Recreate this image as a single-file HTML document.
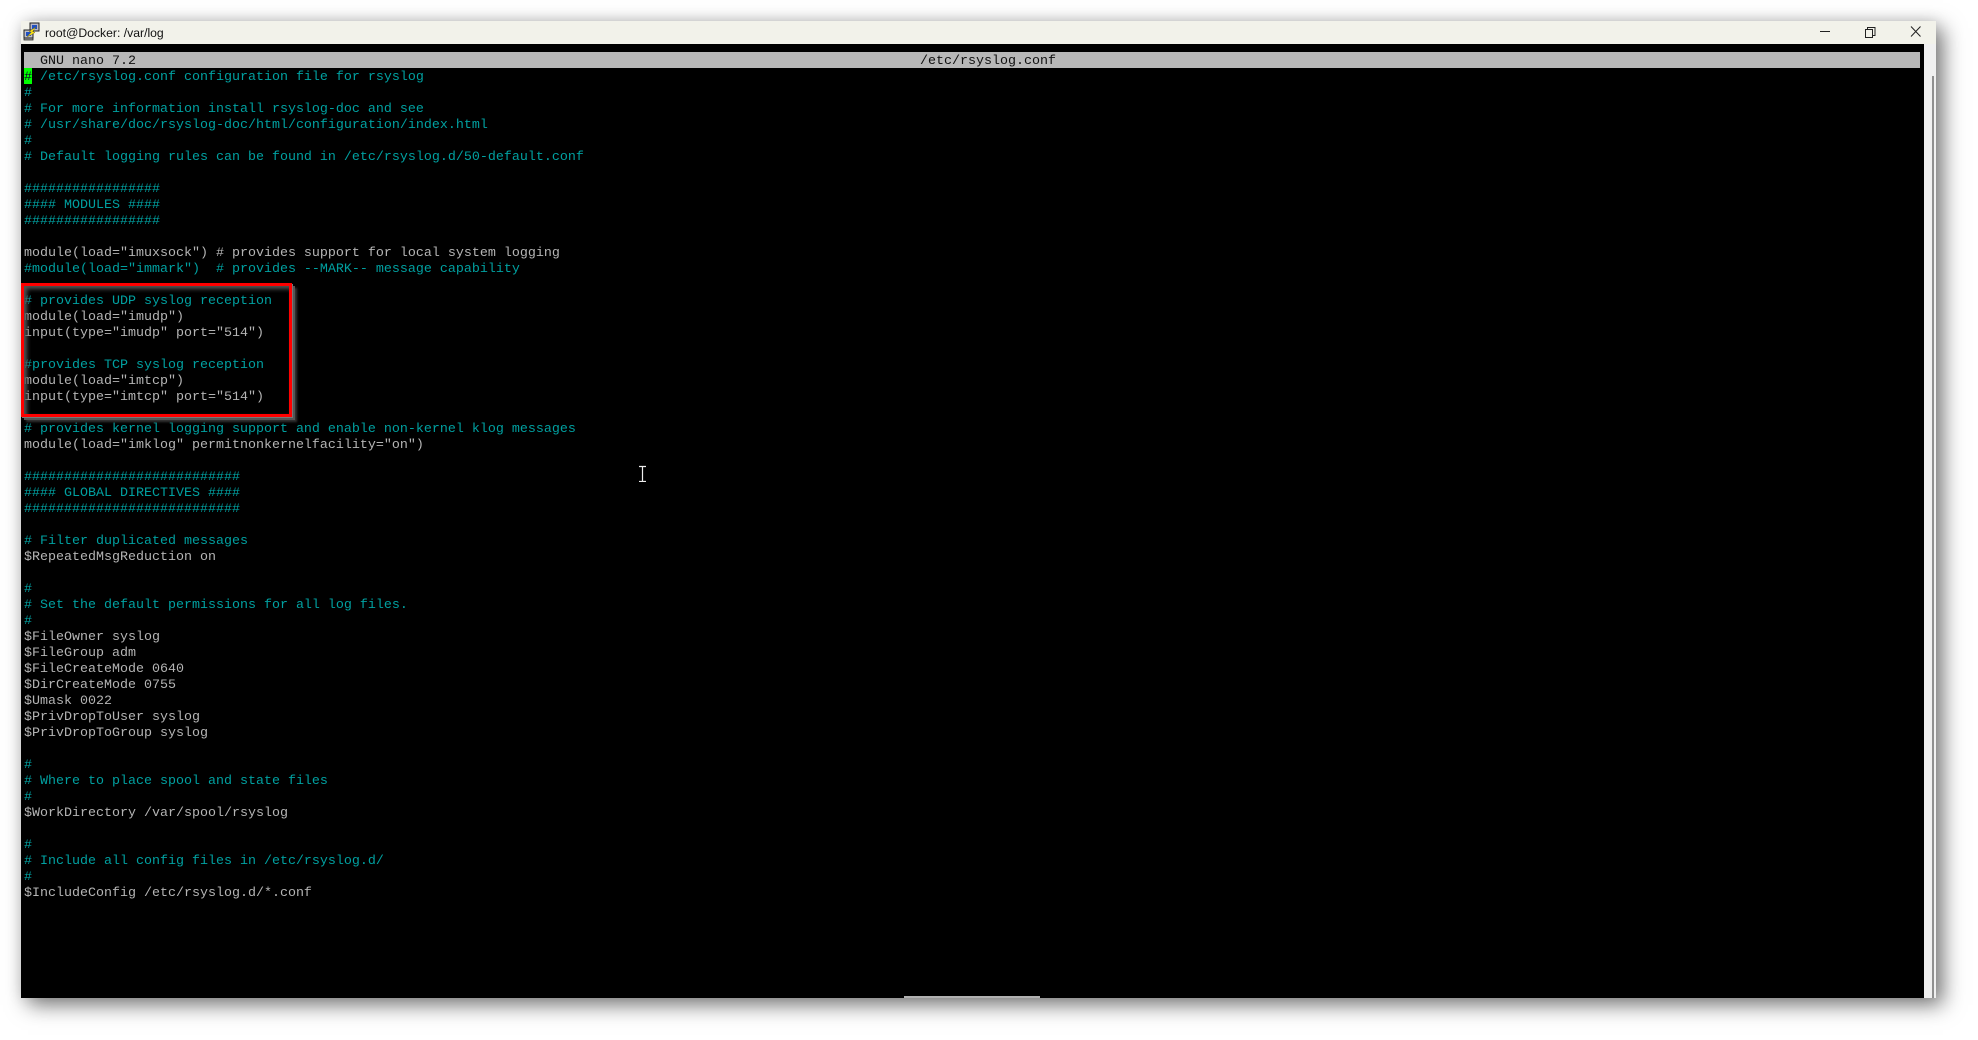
<!DOCTYPE html>
<html>
<head>
<meta charset="utf-8">
<style>
html,body{margin:0;padding:0;background:#fff;width:1978px;height:1040px;overflow:hidden}
#win{position:absolute;left:21px;top:21px;width:1915px;height:977px;background:#f2f2ea;box-shadow:7px 7px 20px rgba(0,0,0,.52),0 0 14px rgba(0,0,0,.1)}
#title{position:absolute;left:45px;top:24px;font:12.2px/18px "Liberation Sans",sans-serif;color:#111;white-space:pre}
#term{position:absolute;left:21px;top:44px;width:1903px;height:954px;background:#000}
#sb{position:absolute;left:1924px;top:44px;width:12px;height:954px;background:#f0f0f0}
#thumb{position:absolute;left:1932px;top:76px;width:2px;height:922px;background:#8f8f8f}
#bar{position:absolute;left:24px;top:52px;width:1896px;height:16px;background:#b8b8b8}
#hthumb{position:absolute;left:904px;top:996px;width:136px;height:2px;background:#b0b0b0}
pre{position:absolute;margin:0;font:13.34px/16px "Liberation Mono",monospace;white-space:pre;color:#b4b4b4}
#text{left:24px;top:70px}
.c{color:#00a0a0}
#h1{left:40px;top:54px;color:#111}
#h2{left:920px;top:54px;color:#111}
#cur{position:absolute;left:24px;top:68px;width:8px;height:16px;background:#00ff00}
#curt{left:24px;top:70px;color:#111}
#box{position:absolute;left:21px;top:283px;width:265px;height:128px;border:3px solid #ff0000;box-shadow:1px 1px 0 #777,3px 3px 0 #555,5px 5px 2px #333,inset 3px 3px 4px #555}
</style>
</head>
<body>
<div id="win"></div>
<svg style="position:absolute;left:23px;top:22px" width="18" height="20" viewBox="0 0 18 20">
<rect x="7" y="1" width="9" height="8" fill="#b8b8c8" stroke="#222" stroke-width="1"/>
<rect x="9" y="3" width="5" height="4" fill="#2050c0"/>
<rect x="1" y="8" width="9" height="8" fill="#c0c0c8" stroke="#222" stroke-width="1"/>
<rect x="3" y="10" width="5" height="4" fill="#2050c0"/>
<path d="M1 16h9v2H1z" fill="#999" stroke="#222" stroke-width=".8"/>
<path d="M13 5 L6 9.500 L8.500 10 L4 15 L12 10.500 L9.500 9.500 Z" fill="#ffe818" stroke="#776600" stroke-width=".4"/>
</svg>
<div id="title">root@Docker: /var/log</div>
<svg style="position:absolute;left:1815px;top:22px" width="120" height="22" viewBox="0 0 120 22">
<path d="M5 9.500H15" stroke="#222" stroke-width="1" fill="none"/>
<path d="M50.500 7.500h7v8h-7z M52.500 7.500V5.500h7.500v8h-2" stroke="#222" stroke-width="1" fill="none"/>
<path d="M96 4.500 L105.500 14.500 M105.500 4.500 L96 14.500" stroke="#222" stroke-width="1" fill="none"/>
</svg>
<div id="term"></div>
<div id="sb"></div>
<div id="thumb"></div>
<div id="hthumb"></div>
<div id="bar"></div>
<pre id="h1">GNU nano 7.2</pre>
<pre id="h2">/etc/rsyslog.conf</pre>
<div id="cur"></div>
<pre id="text"><span class="c"># /etc/rsyslog.conf configuration file for rsyslog
#
# For more information install rsyslog-doc and see
# /usr/share/doc/rsyslog-doc/html/configuration/index.html
#
# Default logging rules can be found in /etc/rsyslog.d/50-default.conf

#################
#### MODULES ####
#################
</span>
module(load="imuxsock") # provides support for local system logging
<span class="c">#module(load="immark")  # provides --MARK-- message capability

# provides UDP syslog reception
</span>module(load="imudp")
input(type="imudp" port="514")

<span class="c">#provides TCP syslog reception
</span>module(load="imtcp")
input(type="imtcp" port="514")

<span class="c"># provides kernel logging support and enable non-kernel klog messages
</span>module(load="imklog" permitnonkernelfacility="on")

<span class="c">###########################
#### GLOBAL DIRECTIVES ####
###########################

# Filter duplicated messages
</span>$RepeatedMsgReduction on

<span class="c">#
# Set the default permissions for all log files.
#
</span>$FileOwner syslog
$FileGroup adm
$FileCreateMode 0640
$DirCreateMode 0755
$Umask 0022
$PrivDropToUser syslog
$PrivDropToGroup syslog

<span class="c">#
# Where to place spool and state files
#
</span>$WorkDirectory /var/spool/rsyslog

<span class="c">#
# Include all config files in /etc/rsyslog.d/
#
</span>$IncludeConfig /etc/rsyslog.d/*.conf</pre>
<pre id="curt">#</pre>
<div id="box"></div>
<svg style="position:absolute;left:636px;top:464px" width="14" height="18" viewBox="0 0 14 18">
<path d="M3 2.500H10 M3 17.500H10 M6.500 2.500V17.500" stroke="#eee" stroke-width="1.200" fill="none"/>
</svg>
</body>
</html>
